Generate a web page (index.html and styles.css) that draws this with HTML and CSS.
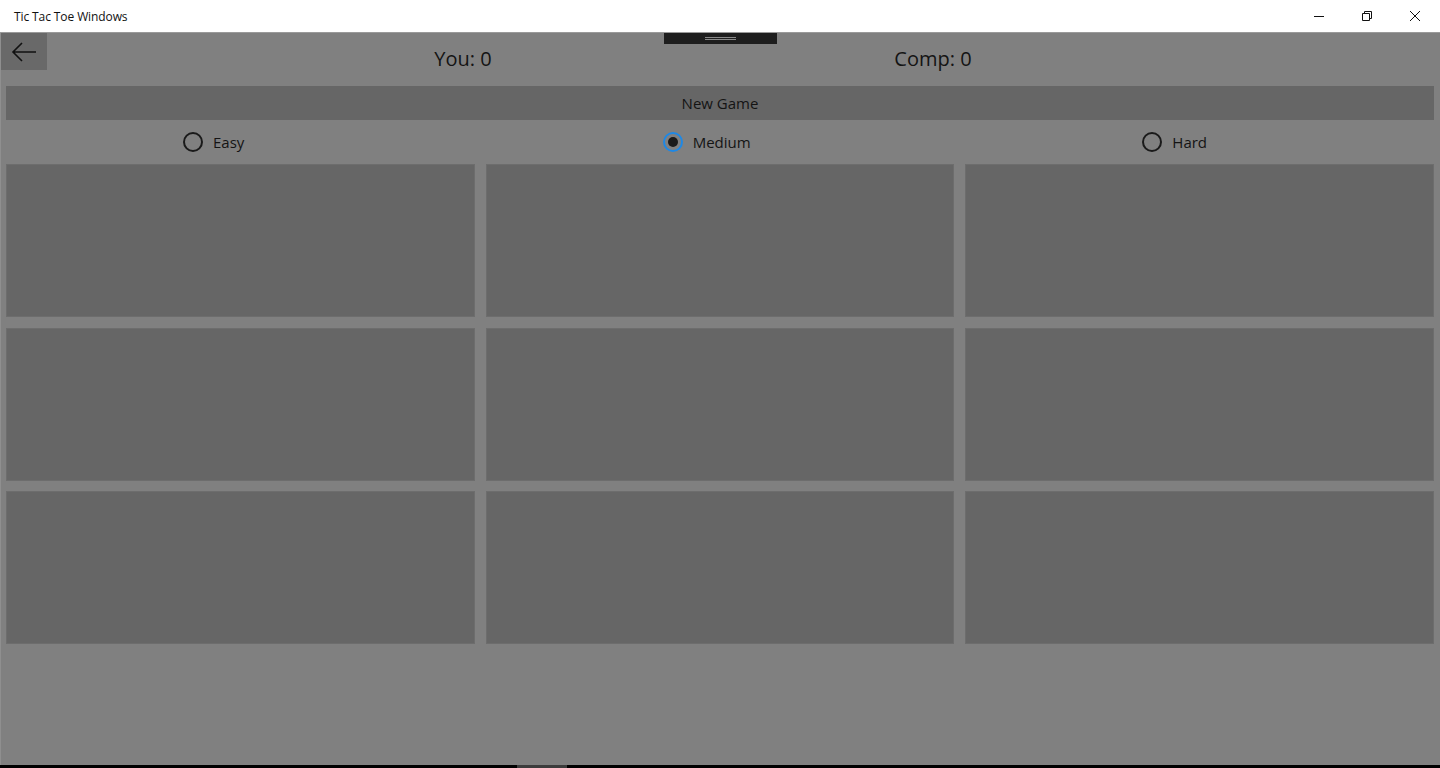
FILE: index.html
```html
<!DOCTYPE html>
<html>
<head>
<meta charset="utf-8" />
<title>Tic Tac Toe Windows</title>
<link rel="stylesheet" href="styles.css">
</head>
<body>
<div class="window">
    <div class="titlebar">
        <span class="title">Tic Tac Toe Windows</span>
        <div class="caption">
            <span class="capbtn">
                <svg width="12" height="12" viewBox="0 0 12 12"><path d="M1 6.5h10" stroke="#111" stroke-width="1" fill="none"/></svg>
            </span>
            <span class="capbtn">
                <svg width="12" height="12" viewBox="0 0 12 12"><path d="M1.5 3.5h7v7h-7z M3.5 3.5v-2h7v7h-2" stroke="#111" stroke-width="1" fill="none"/></svg>
            </span>
            <span class="capbtn">
                <svg width="12" height="12" viewBox="0 0 12 12"><path d="M1 1l10 10M11 1L1 11" stroke="#111" stroke-width="1" fill="none"/></svg>
            </span>
        </div>
    </div>

    <div class="app">
        <span class="handle"><i></i><i></i></span>
        <div class="header">
            <span class="back">
                <svg width="28" height="24" viewBox="0 0 28 24"><path d="M26 12H3M12 3l-9 9 9 9" stroke="#111" stroke-width="1.6" fill="none"/></svg>
            </span>
            <span class="score you">You: 0</span>
            <span class="score comp">Comp: 0</span>
        </div>
        <div class="content">
            <div class="newgame">New Game</div>
            <div class="levels">
                <label class="level"><span class="radio"></span>Easy</label>
                <label class="level"><span class="radio checked"></span>Medium</label>
                <label class="level"><span class="radio"></span>Hard</label>
            </div>
            <div class="board">
                <div class="cell"></div>
                <div class="cell"></div>
                <div class="cell"></div>
                <div class="cell"></div>
                <div class="cell"></div>
                <div class="cell"></div>
                <div class="cell"></div>
                <div class="cell"></div>
                <div class="cell"></div>
            </div>
        </div>
    </div>
    <div class="bottom"><span class="thumb"></span></div>
</div>
</body>
</html>
```

FILE: styles.css
```css
*{ margin:0; padding:0; box-sizing:border-box;}
body{ background:#fff; font-family:"Open Sans","Noto Sans",sans-serif; color:#141414;}
.window{ width:1440px; height:768px; display:flex; flex-direction:column;}

.titlebar{ height:33px; background:#fff; border-bottom:1px solid #9a9a9a; display:flex; align-items:center; justify-content:space-between;}
.title{ font-size:12px; padding-left:14px; color:#111; letter-spacing:-0.1px;}
.caption{ display:flex; height:32px; padding-right:1px;}
.capbtn{ width:48px; height:32px; display:flex; align-items:center; justify-content:center;}

.app{ flex:1; background:#808080; border-left:1px solid #8f8f8f; position:relative;}
.handle{ position:absolute; left:663px; top:0; width:113px; height:11px; background:#1e1e1e; display:flex; flex-direction:column; align-items:center; justify-content:center; gap:1px;}
.handle i{ display:block; width:31px; height:1px; background:#8a8a8a;}

.header{ height:53px; display:flex; align-items:flex-start;}
.back{ width:46px; height:37px; background:#696969; display:flex; align-items:center; justify-content:center;}
.score{ width:200px; text-align:center; font-size:20px; line-height:28px; margin-top:12px;}
.you{ margin-left:316px;}
.comp{ margin-left:270px;}

.content{ padding:0 6px 0 5px;}
.newgame{ height:34px; background:#666; font-size:15px; line-height:34px; text-align:center;}
.levels{ height:44px; display:grid; grid-template-columns:repeat(3,1fr); column-gap:11px;}
.level{ display:flex; align-items:center; padding-left:177px; font-size:15px;}
.radio{ width:20px; height:20px; border:2px solid #1a1a1a; border-radius:50%; margin-right:10px; display:flex; align-items:center; justify-content:center;}
.radio.checked{ border-color:#1e88e5;}
.radio.checked:after{ content:''; width:10px; height:10px; border-radius:50%; background:#1a1a1a;}

.board{ display:grid; grid-template-columns:repeat(3,1fr); grid-template-rows:repeat(3,153px); gap:10.5px 11px;}
.cell{ background:#666; border:1px solid #6d6d6d;}

.bottom{ height:3px; background:#000; position:relative;}
.thumb{ position:absolute; left:517px; top:0; width:50px; height:3px; background:#3c3c3c;}
```
